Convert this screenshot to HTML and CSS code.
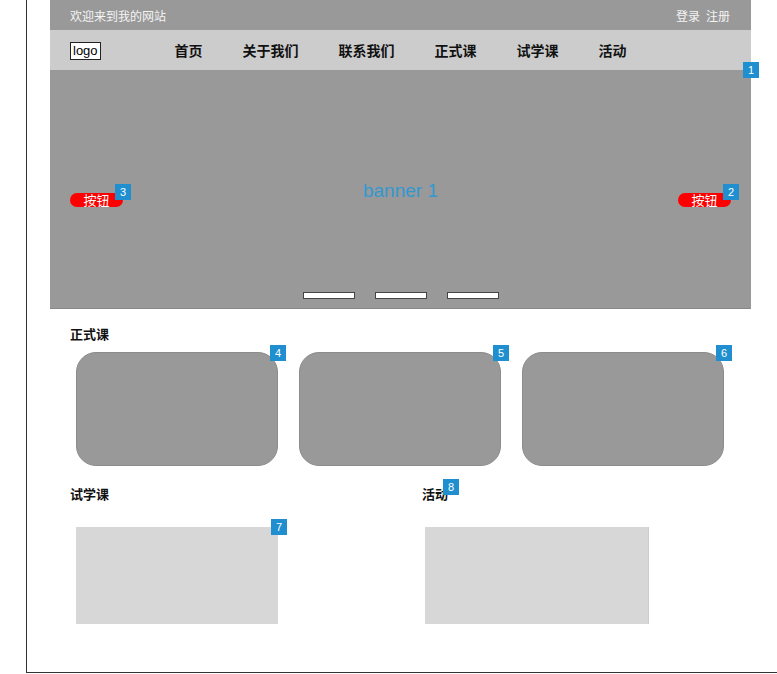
FILE: index.html
```html
<!DOCTYPE html>
<html lang="zh-CN">
<head>
    <meta charset="UTF-8">
    <title>首页</title>
    <link rel="stylesheet" href="styles.css">
</head>
<body>
    <div class="page">
        <div class="site">
            <div class="topbar">
                <span>欢迎来到我的网站</span>
                <span class="account"><span>登录</span><span>注册</span></span>
            </div>
            <div class="nav">
                <div class="logo">logo</div>
                <ul class="menu">
                    <li>首页</li>
                    <li>关于我们</li>
                    <li>联系我们</li>
                    <li>正式课</li>
                    <li>试学课</li>
                    <li>活动</li>
                </ul>
            </div>
            <div class="banner">
                <span class="badge badge-banner">1</span>
                <div class="stage">
                    <button class="btn">按钮<span class="badge badge-btn">3</span></button>
                    <div class="banner-title">banner 1</div>
                    <button class="btn">按钮<span class="badge badge-btn">2</span></button>
                </div>
                <div class="dots">
                    <span class="dot"></span>
                    <span class="dot"></span>
                    <span class="dot"></span>
                </div>
            </div>

            <div class="section">
                <h3>正式课</h3>
                <div class="cards">
                    <div class="card"><span class="badge badge-card">4</span></div>
                    <div class="card"><span class="badge badge-card">5</span></div>
                    <div class="card"><span class="badge badge-card">6</span></div>
                </div>
            </div>

            <div class="section columns">
                <div class="col">
                    <h3>试学课</h3>
                    <div class="box"><span class="badge badge-card">7</span></div>
                </div>
                <div class="col">
                    <h3 class="with-badge">活动<span class="badge badge-title">8</span></h3>
                    <div class="box box-wide"></div>
                </div>
            </div>
        </div>
    </div>
</body>
</html>
```

FILE: styles.css
```css
body {
    margin: 0;
    font-family: "Noto Sans CJK SC", "Liberation Sans", sans-serif;
    background: #fff;
    color: #000;
}
.page {
    margin-left: 26px;
    height: 672px;
    border-left: 1px solid #333;
    border-bottom: 1px solid #333;
    overflow: hidden;
}
.site {
    margin-left: 23px;
    width: 701px;
}
.topbar {
    height: 30px;
    background: #999;
    color: #f4f4f4;
    font-size: 12px;
    display: flex;
    justify-content: space-between;
    align-items: center;
    padding: 0 21px 0 20px;
}
.account {
    display: flex;
    gap: 6px;
}
.nav {
    height: 40px;
    background: #ccc;
    display: flex;
    align-items: center;
    padding-left: 20px;
}
.logo {
    font-family: "Liberation Sans", Arial, sans-serif;
    font-size: 13px;
    line-height: 16px;
    padding: 0 2px;
    background: #fff;
    border: 1px solid #222;
    margin-top: 1px;
}
.menu {
    list-style: none;
    margin: 0 0 0 74px;
    padding: 0;
    display: flex;
    gap: 40px;
    font-size: 14px;
    font-weight: bold;
    color: #111;
}
.banner {
    position: relative;
    height: 238px;
    background: #999;
    border-bottom: 1px solid #888;
    display: flex;
    flex-direction: column;
}
.stage {
    flex: 1;
    display: flex;
    justify-content: space-between;
    align-items: flex-start;
    padding: 113px 20px 0;
}
.btn {
    position: relative;
    width: 53px;
    height: 14px;
    margin-top: 10px;
    padding: 0;
    border: none;
    border-radius: 7px;
    background: #f00;
    color: #fff;
    font-family: "Noto Sans CJK SC", sans-serif;
    font-size: 13px;
    line-height: 14px;
}
.banner-title {
    font-family: "Liberation Sans", Arial, sans-serif;
    font-size: 19px;
    line-height: 20px;
    color: #3298d0;
    margin-top: -2px;
}
.dots {
    display: flex;
    justify-content: center;
    gap: 20px;
    padding-bottom: 9px;
}
.dot {
    width: 50px;
    height: 5px;
    background: #fff;
    border: 1px solid #444;
}
.badge {
    position: absolute;
    width: 16px;
    height: 16px;
    background: #1f8fcf;
    color: #fff;
    font-family: "Liberation Sans", Arial, sans-serif;
    font-size: 11px;
    line-height: 16px;
    text-align: center;
    font-weight: normal;
}
.badge-banner {
    top: -8px;
    right: -8px;
}
.badge-btn {
    top: -9px;
    left: 45px;
}
.badge-card {
    top: -8px;
    right: -9px;
}
.badge-title {
    top: -7px;
    left: 21px;
}
.section {
    padding-left: 20px;
}
.section h3 {
    margin: 17px 0 0;
    font-size: 13px;
    line-height: 16px;
    font-weight: bold;
    color: #111;
}
.cards {
    display: flex;
    gap: 21px;
    margin: 10px 0 0 6px;
}
.card {
    position: relative;
    width: 200px;
    height: 112px;
    background: #999;
    border: 1px solid #8c8c8c;
    border-radius: 20px;
}
.columns {
    display: grid;
    grid-template-columns: 352px 1fr;
}
.columns h3 {
    margin-top: 20px;
}
.with-badge {
    position: relative;
    width: fit-content;
}
.box {
    position: relative;
    width: 202px;
    height: 97px;
    margin: 25px 0 0 6px;
    background: #d7d7d7;
}
.box-wide {
    width: 223px;
    margin-left: 3px;
    border-right: 1px solid #ccc;
}
```
